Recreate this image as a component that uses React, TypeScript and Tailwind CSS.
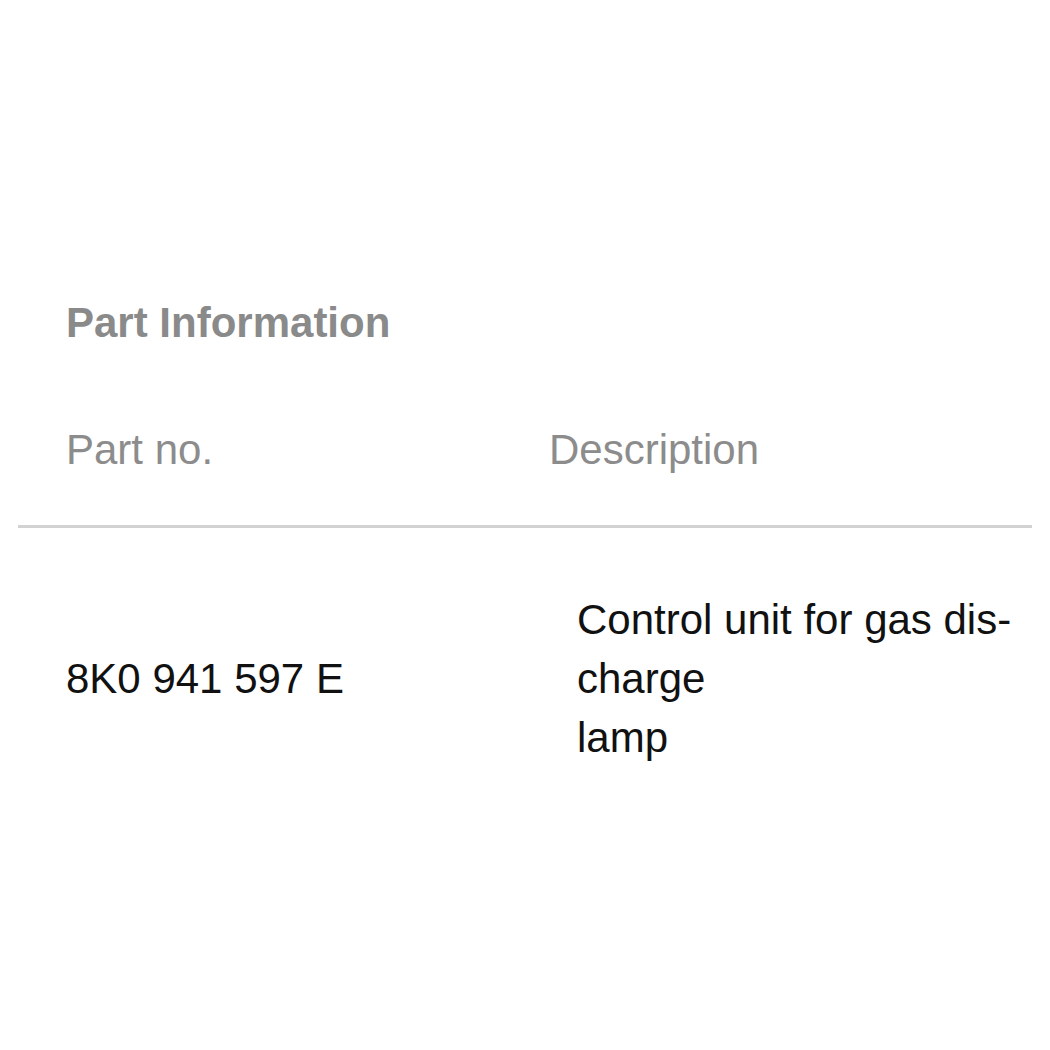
const PartInformation = () => {
    return (
        <div className="min-h-[1050px] bg-white pt-[299px] font-['Liberation_Sans',Arial,sans-serif]">
            <h2 className="pl-[66px] text-[42px] leading-[48px] font-bold text-[#8a8a8a]">Part Information</h2>
            <div className="mx-[18px] mt-[79px]">
                <div className="grid grid-cols-[531px_1fr] border-b-[3px] border-[#d2d2d2] pb-[51px] text-[42px] leading-[48px] text-[#8c8c8c]">
                    <span className="pl-[48px]">Part no.</span>
                    <span>Description</span>
                </div>
                <div className="grid grid-cols-[531px_1fr] pt-[62px] text-[42px] leading-[59px] text-[#111111]">
                    <span className="pl-[48px] self-center">8K0 941 597 E</span>
                    <div className="flex flex-col pl-[28px]">
                        <span>Control unit for gas dis-</span>
                        <span>charge</span>
                        <span>lamp</span>
                    </div>
                </div>
            </div>
        </div>
    )
}

export default PartInformation
